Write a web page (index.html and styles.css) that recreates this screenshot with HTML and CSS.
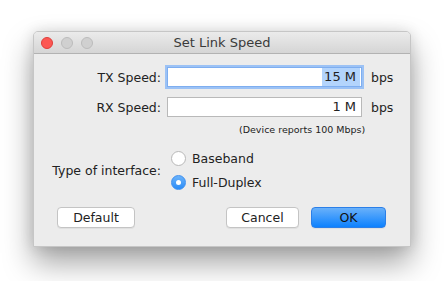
FILE: index.html
```html
<!DOCTYPE html>
<html>
<head>
<meta charset="utf-8">
<link rel="stylesheet" href="styles.css">
</head>
<body>
<div class="window">
  <div class="titlebar">
    <div class="lights">
      <span class="light red"></span>
      <span class="light gray"></span>
      <span class="light gray"></span>
    </div>
    <div class="title">Set Link Speed</div>
  </div>
  <div class="content">
    <div class="speeds">
      <label class="lbl">TX Speed:</label>
      <div class="field focus"><span class="sel">15 M</span></div>
      <span class="unit">bps</span>
      <label class="lbl">RX Speed:</label>
      <div class="field">1 M</div>
      <span class="unit">bps</span>
    </div>
    <div class="note">(Device reports 100 Mbps)</div>
    <div class="type">
      <div class="type-lbl">Type of interface:</div>
      <div class="radios">
        <div class="radio"><span class="dot"></span>Baseband</div>
        <div class="radio"><span class="dot on"></span>Full-Duplex</div>
      </div>
    </div>
    <div class="buttons">
      <button class="btn default">Default</button>
      <div class="right">
        <button class="btn cancel">Cancel</button>
        <button class="btn ok">OK</button>
      </div>
    </div>
  </div>
</div>
</body>
</html>
```
FILE: styles.css
```css
* { box-sizing: border-box; }
html, body { margin: 0; padding: 0; background: #ffffff; }
body {
  font-family: "DejaVu Sans", "Liberation Sans", sans-serif;
  font-size: 12px;
  color: #222;
  padding: 31px 0 0 33px;
  width: 448px;
  height: 281px;
  overflow: hidden;
}
.window {
  width: 378px;
  height: 216px;
  background: #ececec;
  border: 1px solid #c6c6c6;
  border-radius: 5px 5px 0 0;
  box-shadow: 0 16px 30px rgba(0,0,0,0.36), 0 0 14px rgba(0,0,0,0.12);
}
.titlebar {
  height: 22px;
  background: linear-gradient(#ebebeb, #d5d5d5);
  border-bottom: 1px solid #b2b2b2;
  border-radius: 4px 4px 0 0;
  display: flex;
  align-items: center;
  position: relative;
}
.lights {
  display: flex;
  gap: 8px;
  padding-left: 7px;
}
.light {
  width: 12px;
  height: 12px;
  border-radius: 50%;
}
.light.red { background: #fc5753; border: 1px solid #df3e3a; }
.light.gray { background: #d0d0d0; border: 1px solid #bcbcbc; }
.title {
  position: absolute;
  left: 0; right: 0; top: 3px;
  text-align: center;
  font-size: 13px;
  color: #3a3a3a;
}
.content {
  padding: 13px 0 0 0;
}
.speeds {
  display: grid;
  grid-template-columns: 127px 195px auto;
  column-gap: 6px;
  row-gap: 10px;
  align-items: center;
}
.lbl { text-align: right; font-size: 12.5px; }
.field {
  height: 20px;
  background: #fff;
  border: 1px solid #b9b9b9;
  text-align: right;
  padding: 0 5px;
  line-height: 18px;
  font-size: 13px;
}
.field.focus {
  border: 1px solid #7eaef0;
  box-shadow: 0 0 0 2px #9cc2f5;
  padding-right: 1px;
}
.sel { background: #b3d4fc; padding: 0 4px 0 2px; display: inline-block; line-height: 18px; }
.unit { padding-left: 3px; font-size: 12.5px; }
.note {
  font-size: 9.5px;
  padding-left: 205px;
  margin-top: 7px;
  height: 13px;
}
.type {
  display: flex;
  align-items: center;
  margin-top: 13px;
}
.type-lbl { width: 127px; text-align: right; padding-right: 0; font-size: 12.5px; }
.radios {
  display: flex;
  flex-direction: column;
  gap: 7px;
  margin-left: 10px;
}
.radio {
  display: flex;
  align-items: center;
  gap: 6px;
  height: 17px;
  font-size: 12.5px;
}
.dot {
  width: 15px;
  height: 15px;
  border-radius: 50%;
  background: #fff;
  border: 1px solid #b8b8b8;
  position: relative;
}
.dot.on {
  background: linear-gradient(#6cb3fa, #2a8cf7);
  border-color: #3d8ff0;
}
.dot.on::after {
  content: "";
  position: absolute;
  left: 4px; top: 4px;
  width: 5px; height: 5px;
  border-radius: 50%;
  background: #fff;
}
.buttons {
  display: flex;
  justify-content: space-between;
  margin-top: 16px;
  padding: 0 24px 0 23px;
}
.right { display: flex; gap: 12px; }
.btn {
  font-family: "DejaVu Sans", "Liberation Sans", sans-serif;
  font-size: 12.5px;
  height: 21px;
  padding: 0;
  border-radius: 4px;
  background: #fff;
  border: 1px solid #c4c4c4;
  color: #222;
  box-shadow: 0 1px 0 rgba(0,0,0,0.05);
}
.default { width: 78px; }
.cancel { width: 73px; }
.ok {
  width: 75px;
  background: linear-gradient(#69b1fa, #0d81fe);
  border-color: #2b7fe8;
  color: #111;
}
```
